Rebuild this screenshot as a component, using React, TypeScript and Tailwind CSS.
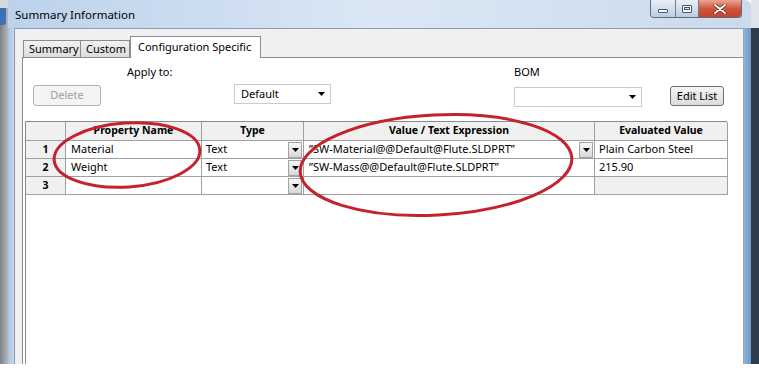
import React from "react";

function Tri() {
  return (
    <svg width="7" height="4" viewBox="0 0 7 4">
      <path d="M0 0h7L3.5 4z" fill="#000" />
    </svg>
  );
}

function DropBtn() {
  return (
    <span className="flex h-[16px] w-[14px] items-center justify-center border border-[#a3a3a3] bg-gradient-to-b from-[#f8f8f8] to-[#d8d8d8]">
      <Tri />
    </span>
  );
}

const rows = [
  { n: "1", name: "Material", type: "Text", value: "\u201dSW-Material@@Default@Flute.SLDPRT\u201d", valueBtn: true, evaluated: "Plain Carbon Steel" },
  { n: "2", name: "Weight", type: "Text", value: "\u201dSW-Mass@@Default@Flute.SLDPRT\u201d", valueBtn: false, evaluated: "215.90" },
  { n: "3", name: "", type: "", value: "", valueBtn: false, evaluated: "" },
];

export default function App() {
  return (
    <div className="relative h-[384px] w-[759px] overflow-hidden bg-white font-['Noto_Sans',sans-serif] text-[11px] text-black">
      <div className="flex h-[364px]">
        {/* app window behind, left */}
        <div className="flex w-[8px] flex-col bg-gradient-to-r from-[#7c8186] to-[#b3b8bd]">
          <div className="h-[8px] bg-[#d4d8dc]" />
          <div className="h-[17px] w-[6px] rounded-br-[3px] bg-[#3f6fb4]" />
        </div>

        {/* dialog */}
        <div className="flex w-[743px] flex-col">
          {/* title bar */}
          <div className="flex h-[28px] items-start rounded-tr-[6px] bg-gradient-to-r from-[#bcd2ec] via-[#dbe7f4] to-[#cbdaec]">
            <span className="whitespace-nowrap pl-[7px] pt-[7px] text-[11.5px] leading-[16px]">Summary Information</span>
            <div className="flex-1" />
            <div className="mr-[9px] flex h-[18px] overflow-hidden rounded-b-[4px] border border-t-0 border-[#5f6d80]">
              <div className="flex w-[25px] items-end justify-center border-r border-[#6f7d90] bg-gradient-to-b from-[#e9f0f8] to-[#bccde2] pb-[4px]">
                <div className="h-[4px] w-[10px] rounded-[1px] border border-[#4a5566] bg-white" />
              </div>
              <div className="flex w-[23px] items-center justify-center border-r border-[#6f7d90] bg-gradient-to-b from-[#e9f0f8] to-[#bccde2]">
                <div className="h-[8px] w-[10px] rounded-[1px] border border-[#4a5566] bg-white">
                  <div className="m-[1px] h-[3px] border border-[#4a5566] bg-[#dfe7f1]" />
                </div>
              </div>
              <div className="flex w-[42px] items-center justify-center bg-gradient-to-b from-[#e9a794] via-[#d0553b] to-[#c6432c]">
                <svg width="14" height="10" viewBox="0 0 14 10">
                  <path d="M2 1l10 8M12 1L2 9" stroke="#5a2a22" strokeWidth="3.4" strokeLinecap="round" />
                  <path d="M2 1l10 8M12 1L2 9" stroke="#fff" strokeWidth="2" strokeLinecap="round" />
                </svg>
              </div>
            </div>
          </div>

          {/* frame + client */}
          <div className="flex flex-1">
            <div className="w-[6px] bg-gradient-to-r from-[#a9c3df] to-[#c6d8ec]" />
            <div className="flex flex-1 flex-col border-t border-l border-[#8d9cb0] bg-[#f0f0f0] pt-[7px] pl-[7px]">
              {/* tabs */}
              <div className="relative z-10 flex h-[21px] items-end whitespace-nowrap pl-[1px]">
                <div className="flex h-[17px] w-[58px] items-center border border-b-0 border-[#898c95] bg-gradient-to-b from-[#f2f2f2] to-[#dcdcdc] pl-[5px]">
                  Summary
                </div>
                <div className="flex h-[17px] w-[49px] items-center border border-b-0 border-l-0 border-[#898c95] bg-gradient-to-b from-[#f2f2f2] to-[#dcdcdc] pl-[5px]">
                  Custom
                </div>
                <div className="-mb-px flex h-[22px] w-[131px] items-start border border-b-0 border-[#898c95] bg-white pl-[7px] pt-[2px]">
                  Configuration Specific
                </div>
              </div>

              {/* tab panel */}
              <div className="flex flex-1 flex-col border-t border-l border-[#898c95] bg-white">
                <div className="flex whitespace-nowrap pt-[6px] leading-[16px]">
                  <span className="ml-[104px] w-[387px]">Apply to:</span>
                  <span>BOM</span>
                </div>
                <div className="mt-[4px] flex h-[24px] items-start whitespace-nowrap">
                  <div className="ml-[10px] mt-[1px] flex h-[21px] w-[68px] items-center justify-center rounded-[3px] border border-[#adb2b5] bg-[#f4f4f4] text-[#a0a0a0]">
                    Delete
                  </div>
                  <div className="ml-[133px] flex h-[20px] w-[97px] items-center justify-between border border-[#c9cbd0] bg-white pl-[6px] pr-[5px]">
                    <span>Default</span>
                    <Tri />
                  </div>
                  <div className="ml-[183px] mt-[3px] flex h-[20px] w-[128px] items-center justify-end border border-[#c9cbd0] bg-white pr-[5px]">
                    <Tri />
                  </div>
                  <div className="ml-[28px] mt-[2px] flex h-[20px] w-[54px] items-center justify-center rounded-[3px] border border-[#707070] bg-gradient-to-b from-[#f4f4f4] to-[#dcdcdc]">
                    Edit List
                  </div>
                </div>

                {/* property grid */}
                <div className="ml-[2px] mt-[13px] flex w-[702px] flex-1 flex-col whitespace-nowrap border-t border-l border-[#8a8a8a] bg-white text-[11px]">
                  <div className="grid h-[19px] grid-cols-[40px_136px_102px_291px_133px] bg-[#f0f0f0] text-[10.5px] font-bold">
                    <div className="border-r border-b border-[#a0a0a0]" />
                    <div className="flex items-center justify-center border-r border-b border-[#a0a0a0]">Property Name</div>
                    <div className="flex items-center justify-center border-r border-b border-[#a0a0a0]">Type</div>
                    <div className="flex items-center justify-center border-r border-b border-[#a0a0a0]">Value / Text Expression</div>
                    <div className="flex items-center justify-center border-r border-b border-[#a0a0a0]">Evaluated Value</div>
                  </div>
                  {rows.map((r) => (
                    <div key={r.n} className="grid h-[18px] grid-cols-[40px_136px_102px_291px_133px]">
                      <div className="flex items-center justify-center border-r border-b border-[#a0a0a0] bg-[#f0f0f0] text-[10.5px] font-bold">
                        {r.n}
                      </div>
                      <div className="flex items-center border-r border-b border-[#a0a0a0] pl-[5px]">{r.name}</div>
                      <div className="flex items-center justify-between border-r border-b border-[#a0a0a0] pl-[4px] pr-[1px]">
                        <span>{r.type}</span>
                        <DropBtn />
                      </div>
                      <div className="flex items-center justify-between border-r border-b border-[#a0a0a0] pl-[5px] pr-[1px]">
                        <span>{r.value}</span>
                        {r.valueBtn && <DropBtn />}
                      </div>
                      <div className={`flex items-center border-r border-b border-[#a0a0a0] pl-[4px] ${r.n === "3" ? "bg-[#f0f0f0]" : "bg-white"}`}>
                        {r.evaluated}
                      </div>
                    </div>
                  ))}
                </div>
              </div>
            </div>
            <div className="w-[8px] border-l border-[#9aa7b5] bg-gradient-to-r from-[#8db4d8] to-[#6a98c2]" />
          </div>
        </div>

        {/* app window behind, right */}
        <div className="flex w-[8px] flex-col">
          <div className="h-[28px] bg-[#dfe4ea]" />
          <div className="flex-1 bg-[#2f3c4b]" />
        </div>
      </div>

      {/* red marker circles drawn over the screenshot */}
      <svg className="pointer-events-none absolute inset-0" width="759" height="384" viewBox="0 0 759 384">
        <ellipse cx="127" cy="155" rx="73" ry="32" transform="rotate(-4 127 155)" fill="none" stroke="#c4222c" strokeWidth="3" />
        <ellipse cx="436" cy="165" rx="136" ry="50" transform="rotate(-3 436 165)" fill="none" stroke="#c4222c" strokeWidth="3" />
      </svg>
    </div>
  );
}
